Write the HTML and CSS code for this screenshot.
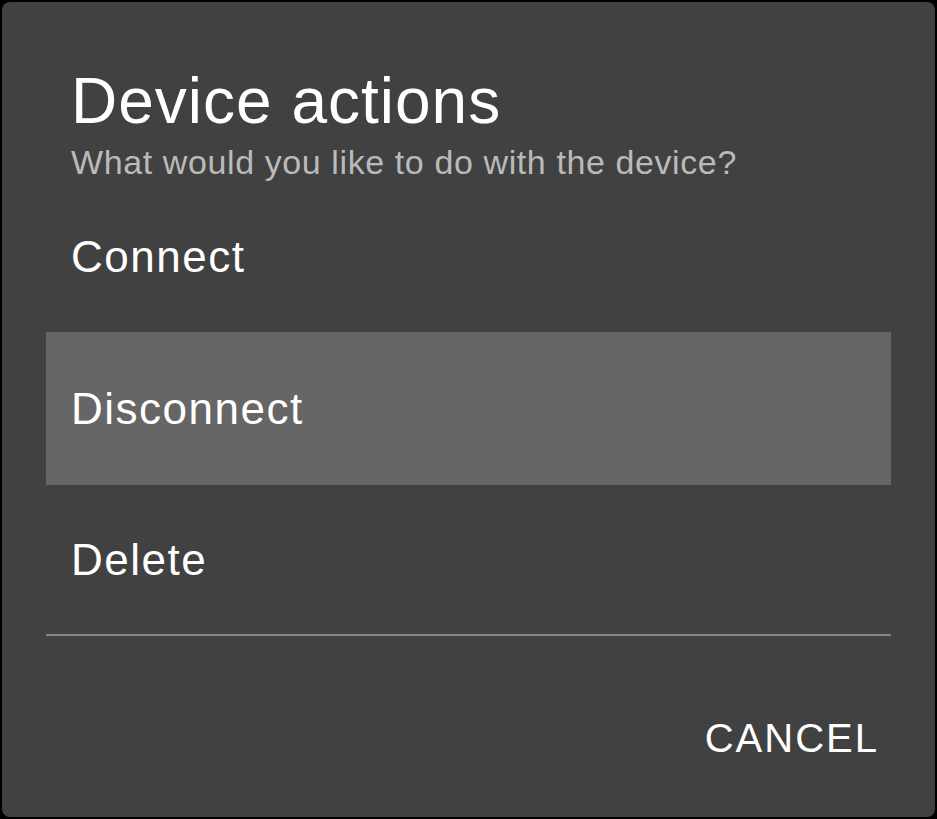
FILE: index.html
```html
<!DOCTYPE html>
<html lang="en">
<head>
<meta charset="utf-8">
<title>Device actions</title>
<link rel="stylesheet" href="styles.css">
</head>
<body>
<div class="dialog">
  <h1 class="title">Device actions</h1>
  <p class="subtitle">What would you like to do with the device?</p>
  <ul class="actions">
    <li class="action action-first">Connect</li>
    <li class="action action-active">Disconnect</li>
    <li class="action action-last">Delete</li>
  </ul>
  <div class="footer">
    <button class="cancel">CANCEL</button>
  </div>
</div>
</body>
</html>
```

FILE: styles.css
```css
html, body {
  margin: 0;
  padding: 0;
  background: #000;
}
body {
  width: 937px;
  height: 819px;
  overflow: hidden;
  font-family: "Liberation Sans", Arial, sans-serif;
}
.dialog {
  box-sizing: border-box;
  margin: 2px;
  width: 933px;
  height: 815px;
  background: #414141;
  border-radius: 8px;
  padding: 61px 44px 0 44px;
  display: flex;
  flex-direction: column;
}
.title {
  margin: 0 0 0 25px;
  font-size: 64px;
  line-height: 76px;
  font-weight: normal;
  color: #fff;
  letter-spacing: 1px;
}
.subtitle {
  margin: 3px 0 0 25px;
  font-size: 34px;
  line-height: 40px;
  color: #bababa;
  letter-spacing: 0.6px;
}
.actions {
  list-style: none;
  margin: 0;
  padding: 0;
  border-bottom: 2px solid #858585;
}
.action {
  box-sizing: border-box;
  height: 150px;
  display: flex;
  align-items: center;
  padding-left: 25px;
  font-size: 44px;
  color: #fff;
  letter-spacing: 1.5px;
}
.action-active {
  height: 153px;
  background: #666666;
}
.action-last {
  height: 149px;
}
.footer {
  display: flex;
  justify-content: flex-end;
  padding: 78px 12px 0 0;
}
.cancel {
  background: none;
  border: 0;
  padding: 0;
  margin: 0;
  font-family: "Liberation Sans", Arial, sans-serif;
  font-size: 40px;
  line-height: 48px;
  letter-spacing: 2px;
  color: #fff;
}
```
